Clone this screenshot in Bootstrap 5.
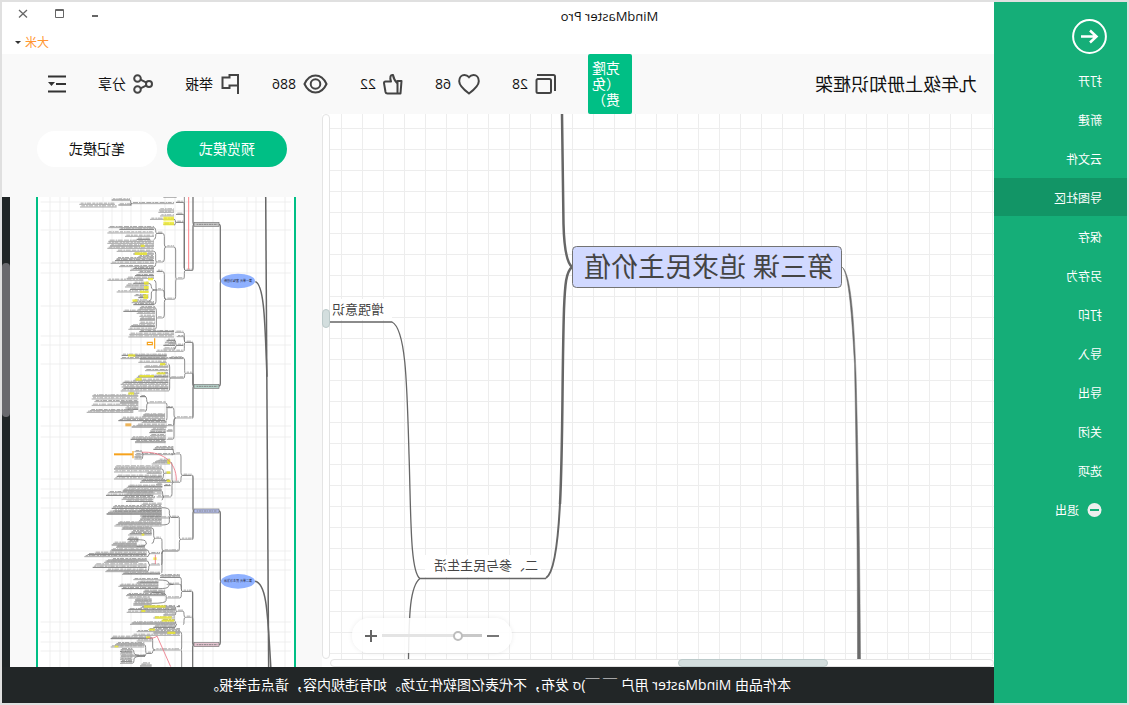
<!DOCTYPE html>
<html lang="zh-CN">
<head>
<meta charset="utf-8">
<meta name="viewport" content="width=device-width, initial-scale=1">
<title>MindMaster Pro</title>
<link href="https://cdn.jsdelivr.net/npm/bootstrap@5.3.0/dist/css/bootstrap.min.css" rel="stylesheet">
<style>
  body { font-family: "Open Sans", "Noto Sans CJK SC", sans-serif; font-size: 14px; line-height: 20px; color: #111; }
  .btn { font-family: inherit; font-size: 14px; line-height: 20px; color: #111; }
  /* the whole window is shown flipped left to right */
  .app-window { min-height: 100vh; border: 2px solid #e0e0e0; transform: scaleX(-1); background: #fff; }
  .side-menu { width: 133px; flex: none; background: #15ae78; }
  .back-btn { margin: 17px 0 7px 20px; width: 35px; height: 35px; }
  .side-menu a { display: flex; align-items: center; gap: 8px; height: 38px; margin-bottom: 1px; padding: 3px 0 0 25px; color: #fff; font-size: 12px; text-decoration: none; }
  .side-menu a.active { background: #129566; }
  .title-bar { height: 28px; font-size: 13px; }
  .title-name { margin-right: 223px; }
  .title-bar .window-tools { right: 13px; top: 4px; gap: 20px; }
  .user-bar { height: 26px; margin-bottom: -2px; }
  .user-bar .btn { font-size: 12px; line-height: 16px; color: #ff9632; padding-right: 13px; }
  .work-bar { height: 60px; background: #f9f9f9; padding: 0 45px 0 17px; }
  .work-bar h1 { font-size: 18px; line-height: 24px; }
  .work-bar .clone-btn { width: 44px; height: 60px; margin-right: 32px; padding: 6px 4px 6px 12px; background: #00bf85; color: #fff; line-height: 16px; border-radius: 2px; text-align: left; }
  .stats { gap: 32px; }
  .stats .btn { display: flex; align-items: center; gap: 7px; }
  .main-col, .canvas-col { min-width: 0; }
  .map-canvas { height: 545px; overflow: hidden; background-color: #fff;
    background-image: linear-gradient(90deg, #ededed 1px, transparent 1px), linear-gradient(#ededed 1px, transparent 1px);
    background-size: 21px 21px; background-position: 1px 14px; }
  .bar-track { background: #fff; border: 1px solid #e4e4e4; border-radius: 4px; }
  .bar-thumb { background: #d3dede; border: 1px solid #bccaca; border-radius: 4px; }
  .h-track { height: 8px; padding-left: 165px; }
  .h-track .bar-thumb { width: 150px; height: 8px; margin-top: -1px; }
  .v-track { width: 8px; height: 545px; flex: none; padding-top: 194px; }
  .v-track .bar-thumb { width: 8px; height: 19px; margin-left: -1px; }
  .zoom-pill { right: 22px; bottom: 6px; width: 160px; height: 35px; border-radius: 18px; background: rgba(255,255,255,.88); box-shadow: 0 0 5px rgba(0,0,0,.08); padding: 0 13px; }
  .zoom-pill input { appearance: none; width: 100px; height: 12px; background: linear-gradient(90deg, #c8c8c8 25%, #e4e4e4 25%) center / 100% 3px no-repeat; }
  .zoom-pill input::-webkit-slider-thumb { appearance: none; width: 10px; height: 10px; border-radius: 50%; border: 2px solid #bdbdbd; background: #fff; }
  .view-panel { width: 320px; flex: none; background: #f9f9f9; }
  .mode-row { gap: 10px; padding: 17px 35px 30px; }
  .mode-btn { width: 120px; height: 36px; border-radius: 18px; border: 0; background: #fff; }
  .mode-btn.on { background: #00bf85; color: #fff; }
  .preview { width: 260px; margin-left: 26px; height: 470px; border: solid #00bf85; border-width: 0 2px; background: #fff; overflow: hidden; }
  .dark-track { width: 8px; background: #202526; padding-top: 66px; }
  .dark-track div { height: 154px; background: #69696d; border-radius: 4px; }
  .notice { min-height: 36px; background: #222627; color: #fff; }
  .node-title { font-size: 27px; fill: #444; }
  .node-sub { font-size: 13px; fill: #444; }
</style>
</head>
<body class="bg-white">
<div class="app-window d-flex">
  <nav class="side-menu" aria-label="文件">
    <button class="back-btn btn p-0 border-0 d-block" aria-label="返回">
      <svg class="d-block" width="35" height="35" viewBox="0 0 35 35" fill="none" stroke="#fff"><circle cx="17.5" cy="17.5" r="16.4" stroke-width="2"/><path d="M26 17.5H10M17 11.500l-6.500 6 6.500 6" stroke-width="2.500"/></svg>
    </button>
    <a href="#">打开</a><a href="#">新建</a><a href="#">云文件</a><a href="#" class="active">导图社区</a><a href="#">保存</a><a href="#">另存为</a><a href="#">打印</a><a href="#">导入</a><a href="#">导出</a><a href="#">关闭</a><a href="#">选项</a>
    <a href="#"><svg width="15" height="16"><circle cx="7.500" cy="7" r="7" fill="#eee"/><path d="M3 7h9" stroke="#15ae78" stroke-width="2"/></svg>退出</a>
  </nav>

  <div class="main-col flex-grow-1 d-flex flex-column">
    <header>
      <div class="title-bar position-relative d-flex align-items-center justify-content-center">
        <span class="title-name">MindMaster Pro</span>
        <div class="window-tools position-absolute d-flex">
          <button class="btn p-0 border-0 d-flex" aria-label="最小化"><svg width="16" height="16"><path d="M5 10h6" stroke="#666" stroke-width="2"/></svg></button>
          <button class="btn p-0 border-0 d-flex" aria-label="最大化"><svg width="16" height="16"><path d="M3.500 3.500h8v8h-8zM3 4.500h9" fill="none" stroke="#666"/></svg></button>
          <button class="btn p-0 border-0 d-flex" aria-label="关闭"><svg width="16" height="16"><path d="M4 4l8 7.500M12 4l-8 7.500" stroke="#666" stroke-width="1.300"/></svg></button>
        </div>
      </div>
      <div class="user-bar d-flex align-items-center justify-content-end">
        <button class="btn border-0 py-0 ps-0 d-flex align-items-center gap-1">大米 <svg width="6" height="4"><path d="M0 0h6L3 3z" fill="#333"/></svg></button>
      </div>
      <div class="work-bar d-flex align-items-center">
        <h1 class="m-0 fw-normal me-auto">九年级上册知识框架</h1>
        <button class="btn clone-btn border-0">克隆（免费）</button>
        <div class="stats d-flex">
          <button class="btn p-0 border-0"><svg width="21" height="22" fill="none" stroke="#444" stroke-width="2"><rect x="5" y="6" width="14.500" height="14" rx="1.500"/><path d="M1 18V3.500Q1 2 2.500 2H19"/></svg>28</button>
          <button class="btn p-0 border-0"><svg width="22" height="22" fill="none" stroke="#444" stroke-width="2"><path d="M11 20.500C7 17.500 1.200 13 1.200 8.200 1.200 4.500 3.600 2 6.500 2 8.500 2 10 3 11 4.200 12 3 13.500 2 15.500 2c2.900 0 5.300 2.500 5.300 6.200 0 4.800-5.800 9.300-9.800 12.300z"/></svg>68</button>
          <button class="btn p-0 border-0"><svg width="20" height="22" fill="none" stroke="#444" stroke-width="2" stroke-linejoin="round"><path d="M1.500 8h4v12.500h-3zM5.500 10.500C8 8 9.500 5.500 10 2c2.500-.5 3.500 2 2 6.500h5.500q1.500 0 1.500 1.700l-1.500 8.800q-.3 1.500-2 1.500h-10"/></svg>22</button>
          <button class="btn p-0 border-0"><svg width="25" height="22" fill="none" stroke="#444" stroke-width="2"><path d="M1.500 11C4 5.500 8 2.500 12.500 2.500S21 5.500 23.500 11C21 16.500 17 19.500 12.500 19.500S4 16.500 1.500 11z"/><circle cx="12.500" cy="11" r="4.800"/></svg>886</button>
          <button class="btn p-0 border-0"><svg width="20" height="22" fill="none" stroke="#444" stroke-width="2"><path d="M2 21V2h8.500v2.500h7V15h-7v-2.500H2"/></svg>举报</button>
          <button class="btn p-0 border-0"><svg width="20" height="22" fill="none" stroke="#444" stroke-width="2"><circle cx="4" cy="11" r="3"/><circle cx="15.500" cy="5.500" r="3.300"/><circle cx="15.500" cy="16.500" r="3.300"/><path d="M6.500 9.700l6-3M6.500 12.300l6 3"/></svg>分享</button>
          <button class="btn p-0 border-0" aria-label="目录"><svg width="19" height="20" stroke="#333" stroke-width="2"><path d="M0 2.500h18M0 10h10M0 17.500h18"/><path d="M11 8h7l-3.500 4z" fill="#333" stroke="none"/></svg></button>
        </div>
      </div>
    </header>

    <main class="d-flex flex-grow-1">
      <div class="canvas-col flex-grow-1">
        <div class="map-canvas position-relative">
          <svg class="d-block" width="664" height="545" fill="none" stroke="#666">
            <path d="M152 153C143 159 140 205 138 260 136 330 134 450 133.500 545h3C136.500 450 137.500 350 139.500 250 142 205 145 159 152 153z" fill="#6a6a6a" stroke="#6a6a6a" stroke-width=".5"/>
            <path d="M422 153C428 148 430 130 430.500 110 431.500 60 431.500 30 432 0M422 153C428 158 429 170 430 195 432 260 431 330 434 390" stroke-width="2.500"/>
            <path d="M434 389C436 430 440 459 448 464" stroke-width="2"/>
            <rect x="453" y="441" width="116" height="22" fill="#fff" stroke="none"/>
            <rect x="602" y="185" width="62" height="21" fill="#fff" stroke="none"/>
            <path d="M448 464.500H574C584 458 583 400 585 340 587 270 588 215 602 208H664M574 464.500C584 472 585 500 585.500 545" stroke-width="1.300"/>
            <rect x="152.500" y="132.500" width="269" height="41" rx="4" fill="#d1d9ff" stroke="#737373"/>
            <g stroke="none"><text class="node-title" x="160" y="163">第三课 追求民主价值</text>
            <text class="node-sub" x="456" y="456">二、参与民主生活</text>
            <text class="node-sub" x="610" y="200">增强意识</text></g>
          </svg>
          <div class="zoom-pill position-absolute d-flex align-items-center justify-content-between">
            <button class="btn p-0 border-0 d-flex" aria-label="缩小"><svg width="12" height="12"><path d="M0 6h12" stroke="#777" stroke-width="2"/></svg></button>
            <input type="range" min="0" max="100" value="21" aria-label="缩放">
            <button class="btn p-0 border-0 d-flex" aria-label="放大"><svg width="12" height="12"><path d="M0 6h12M6 0v12" stroke="#666" stroke-width="2"/></svg></button>
          </div>
        </div>
        <div class="bar-track h-track"><div class="bar-thumb"></div></div>
      </div>
      <div class="bar-track v-track"><div class="bar-thumb"></div></div>
      <aside class="view-panel">
        <div class="mode-row d-flex">
          <button class="btn mode-btn on p-0">预览模式</button>
          <button class="btn mode-btn p-0">笔记模式</button>
        </div>
        <div class="d-flex justify-content-between">
          <div class="preview">
            <svg class="d-block" width="256" height="470" role="img" aria-label="导图预览">
              <g id="thumb" fill="none"></g>
              <g stroke="none" fill="#223" font-size="3" text-anchor="middle"><text x="56" y="85">第一单元 富强与创新</text><text x="56" y="385">第二单元 民主与法治</text></g>
            </svg>
          </div>
          <div class="dark-track"><div></div></div>
        </div>
      </aside>
    </main>
    <footer class="notice d-flex align-items-center justify-content-center">本作品由 MindMaster 用户 ￣ ￣)σ 发布，不代表亿图软件立场。如有违规内容，请点击举报。</footer>
  </div>
</div>
<script src="https://cdn.jsdelivr.net/npm/bootstrap@5.3.0/dist/js/bootstrap.bundle.min.js"></script>
<script>
// Overview map: three units per pixel, x runs from the leaf side to the root side.
const g = document.getElementById('thumb');
g.setAttribute('transform', 'translate(294 -7) scale(-.33333 .33333)');
let out = '';
const line = (d, c, w, extra = '') => out += `<path d="${d}" stroke="${c}" stroke-width="${w}" ${extra}/>`;
[50,60,69,103,112,122,131,141,165,175,203,213,247,256,285].forEach(x => line(`M${x*3} 0V1440`, '#ececec', 2.5));
[202,211,230,263,273,306,336,345,364,407,426,437,479,489,498,508,551,560,570,622,632,642,651].forEach(y => line(`M122 ${(y-190)*3}H873`, '#ececec', 2.5));

// leaf rows: y, left, right
const rows = [
 [[30,335,390],[43,238,345],[51,240,350],[45,355,395],[41,395,522],[22,490,530],[37,528,550],[60,477,522],[67,475,522],[73,528,550],[78,480,522],[88,450,522],[97,528,550],[103,490,522],
 [113,325,462],[118,358,462],[129,322,462],[139,375,462],[148,410,450],[154,325,462],[160,322,462],[168,330,462],[175,322,462],[184,350,462],[192,400,462],[200,415,462],[206,350,462],[212,345,462],[220,332,462],[230,357,462],[236,400,462],[241,390,462],[248,415,462],[257,405,462],[265,380,462],[271,322,430],[280,400,445],[285,380,445],[291,375,445],[298,390,445],[306,350,445],[317,403,445],[323,415,445],[333,400,445],[338,395,462],[344,400,462],[353,420,465],[358,415,465],[364,370,465],[370,410,465],[379,418,465],[387,420,465],[391,418,465],[400,418,465],[408,395,465],[410,390,465],[418,385,465],[425,418,522],[433,388,522],[441,385,522],[451,500,525],[457,495,525],[461,505,525],[466,490,525],[477,490,525],[484,468,525],[496,365,500],[499,400,500],[506,362,550],
 [130,470,487],[171,498,522],[216,470,487],[241,556,577],[267,530,550],[328,498,522],[244,470,487],[300,470,487],[384,470,487],[457,556,577],[427,525,550],[440,530,550],[466,530,550],[484,525,550]],
 [[27,420,500],[37,415,500],[43,480,500],[51,433,505],[62,435,505],[71,470,505],[79,415,505],[82,410,505],[91,400,505],[97,370,505],[103,362,505],[111,365,505],[115,370,505],[123,362,505],[130,385,418],[138,277,415],[147,275,415],[155,283,415],[159,360,415],[166,275,415],[174,376,415],[178,380,415],[182,270,400],[187,260,400],[195,430,495],[199,427,495],[205,365,495],[212,355,495],[218,425,500],[226,410,500],[231,395,500],[238,455,497],[243,450,497],[248,448,497],[257,450,497],[264,395,497],[268,392,497],[275,405,497],[278,405,497],
 [84,510,550],[70,556,577],[24,510,550],[140,420,438],[159,445,497],[183,415,438],[173,500,518],[204,527,575],[227,500,518],[243,500,518],[268,500,518],
 [293,465,520],[298,460,520],[305,403,425],[314,405,520],[321,403,425],[327,403,425],[331,475,510],[336,465,510],[342,455,510],[351,345,485],[357,342,485],[366,342,485],[370,440,485],[379,350,485],[383,435,485],[387,342,485],[392,425,510],[397,420,540],[403,468,487],[409,385,487],[412,380,487],[420,370,485],[423,368,485],[428,325,460],[432,380,485],[436,318,460],[443,370,465],[448,365,460],[454,378,460],[463,425,485],[470,340,485],[475,335,485],[481,420,485],[487,325,485],[492,320,485],[498,420,485],[504,425,510],[376,547,575],[312,525,540],[370,492,512],[407,492,512],[441,470,512]],
 [[3,340,485],[12,320,485],[19,425,485],[22,512,535],[27,420,485],[32,417,485],[39,355,485],[43,350,485],[48,343,485],[54,367,455],[58,365,455],[65,395,455],[71,390,455],[75,384,455],[85,384,415],[89,382,415],[95,385,415],[100,340,410],[105,335,410],[109,350,435],[112,348,435],[120,335,440],[123,330,440],[130,283,440],[134,263,440],[140,253,440],[149,335,440],[153,320,440],[157,312,415],[165,285,440],[172,278,440],[181,320,440],[185,316,440],[190,370,480],[193,366,480],[197,480,540],[202,480,540],[209,400,475],[217,420,475],[219,410,475],[226,360,475],[229,355,475],[236,365,475],[244,430,495],[247,430,495],[254,382,495],[257,378,495],[264,385,450],[270,405,455],[275,403,455],[280,400,455],[285,400,455],[290,430,525],[293,422,525],[299,385,525],[303,423,525],[307,380,525],[315,490,525],[324,460,525],[332,485,525],[339,397,525],[343,390,525],[348,465,525],[352,460,525],[359,445,540],[365,410,540],[369,460,540],[376,397,540],[382,335,455],[386,332,455],[393,410,455],[401,350,433],[405,345,433],[411,332,433],[419,362,397],[424,360,397],[428,362,397],[432,360,397],[438,362,435],[444,360,397],[449,360,397],[455,362,397],[460,360,397],[462,425,450],[468,420,455],
 [88,542,575],[85,465,483],[123,490,535],[131,450,480],[165,450,480],[244,547,575],[264,500,540],[322,556,575],[290,530,540],[304,530,550],[420,465,540],[430,440,455],[223,500,540]]
];
rows.forEach((tile, t) => tile.forEach(([y, a, b], i) => {
  const yy = y + t * 480;
  line(`M${a} ${yy}H${b}`, '#6c6c6c', i % 3 ? 1.8 : 2.8);
  line(`M${a + 4} ${yy - 3.5}H${b}`, '#a2a2a2', 2.8, `stroke-dasharray="${7 + i % 5 * 2} 3 ${4 + i % 3} 2 ${11 + i % 4} 4"`);
}));

// highlighted words: x, y, width, height
[[490,80,32,12],[490,95,32,11],[422,164,12,7],[404,187,37,8],[444,264,15,7],[432,275,14,9],[432,288,14,10],[420,302,26,7],[430,313,14,14],[397,328,15,7],[384,493,22,7],[480,519,16,7],[470,547,26,6],[418,555,44,7],[407,564,18,8],[385,607,17,7],[502,808,9,14],[500,844,11,7],[500,869,11,7],[425,1031,8,6],[460,1102,10,8],[432,1246,65,7],[424,1260,12,6],[465,1279,50,7],[485,1288,38,7],[447,1316,18,6],[502,1325,24,7],[438,1339,12,6],[344,1367,11,5]]
 .forEach(([x, y, w, h]) => out += `<rect x="${x}" y="${y}" width="${w}" height="${h}" fill="#f1ee20" opacity=".75"/>`);

// connectors: parent x, parent y, trunk x, child x, child ys
const join = (px, py, tx, cx, ys, w = 2.5) => ys.forEach(y => {
  const s = Math.sign(y - py), r = Math.min(9, Math.abs(y - py) / 2);
  line(`M${px} ${py}Q${tx} ${py} ${tx} ${py + s * r}V${y - s * r}Q${tx} ${y} ${cx} ${y}`, '#777', w);
});
[[664,273,661,657,[103,588],4],[664,1174,661,657,[963,1364],4],
 [582,103,579,577,[-60,241],4],[582,588,579,577,[457,550,684],4],[582,963,579,577,[856,1048],4],[582,1364,578,577,[1204,1282,1500],4],
 [556,241,553,550,[-40,37,73,97,267]],[530,267,527,522,[171,328]],[498,171,493,487,[130,216]],[498,328,493,487,[244,300,384]],
 [470,130,467,462,[113,148]],[470,216,467,462,[184,230]],[470,300,468,462,[271,343]],[470,300,454,446,[280,333]],[470,384,469,465,[353,418]],
 [556,457,553,550,[427,440,484]],[530,466,527,522,[450,477]],[528,97,526,522,[88,105]],[395,41,392,390,[30,45]],
 [556,550,554,550,[504,565]],[510,565,509,505,[522,603]],[527,684,522,518,[653,707,748]],[500,653,501,497,[639,692]],[445,639,440,436,[620,664]],
 [547,856,543,540,[792,877]],[525,792,520,515,[775,794]],[520,877,516,512,[816,920]],[492,850,490,485,[837,867]],[430,794,428,425,[785,807]],[492,921,488,485,[903,930]],
 [542,1048,538,535,[979,1083]],[512,979,508,485,[953,1005]],[490,1083,486,483,[1045,1091,1125,1150]],[465,1045,461,455,[1014,1060]],[440,1060,437,410,[1049,1069]],[450,1091,446,440,[1080,1100]],[450,1125,446,440,[1113,1145]],
 [547,1204,544,540,[1162,1183,1224]],[520,1183,505,475,[1170,1196]],[500,1224,498,455,[1207,1240]],[556,1282,552,550,[1264,1304]],[530,1264,527,525,[1250,1275]],[530,1304,527,525,[1294,1312]],
 [542,1380,545,540,[1325,1440]],[465,1380,458,455,[1342,1390]],[440,1390,437,433,[1364,1398]],[435,1398,402,397,[1379,1420]]
].forEach(a => join(...a));
line('M797 0L806 1440', '#666', 4.5);
line('M766 275C795 285 795 420 801 560', '#666', 4.5);
line('M765 1174C802 1180 803 1280 813 1440', '#666', 4.5);
// relations and notes
line('M566 0V238', '#ff8088', 3);
line('M425 787C480 783 530 810 529 872M466 1094V1122M445 1345Q465 1345 471 1338L512 1430', '#ed7584', 2.5);
line('M464 445V476M442 457H457V464H442ZM399 783V805', '#f6a21c', 3.5);
line('M342 793H398', '#f6a21c', 6);
out += '<rect x="376" y="700" width="18" height="9" fill="#edb45a"/>';
// unit and lesson boxes
[273, 1174].forEach(y => out += `<ellipse cx="714" cy="${y}" rx="51" ry="22" fill="#8fb1ff"/>`);
[[97,'#c8c8c8'],[583,'#b4d1c8'],[957,'#b5bff0'],[1358,'#e5c3d0']].forEach(([y, c]) => {
  out += `<rect x="582" y="${y}" width="75" height="12" fill="${c}" stroke="#777" stroke-width="2"/>`;
  line(`M590 ${y + 6}H652`, '#888', 3, 'stroke-dasharray="5 2 7 1"');
});
g.innerHTML = out;
</script>
</body>
</html>
